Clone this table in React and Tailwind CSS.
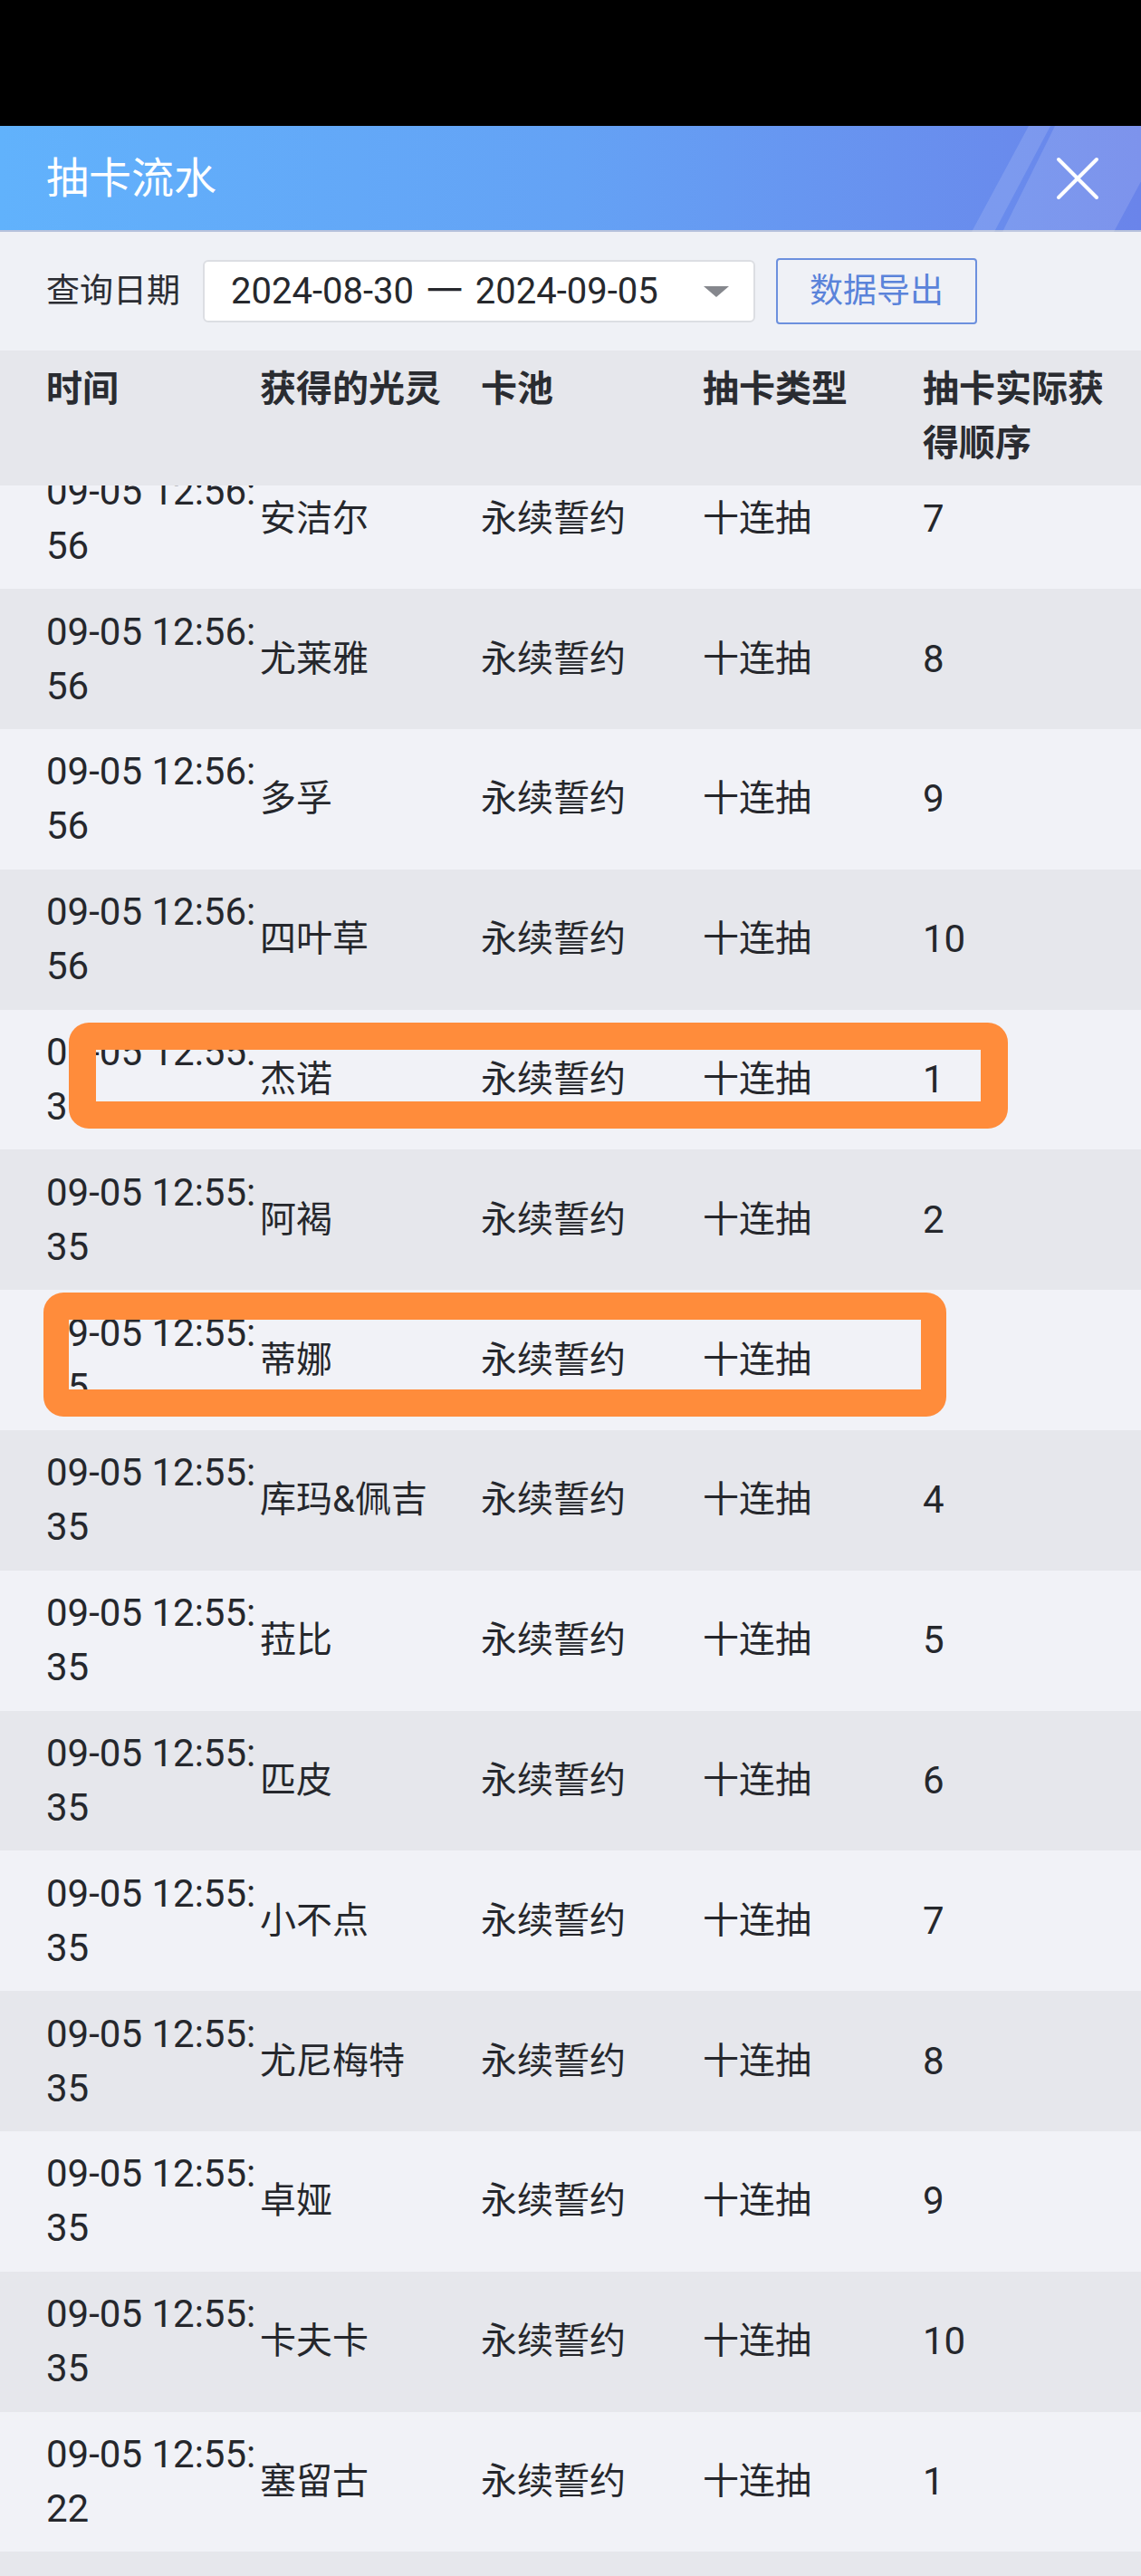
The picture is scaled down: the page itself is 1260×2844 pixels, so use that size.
import React from "react";

const rows = [
  { t1: "09-05 12:56:", t2: "56", name: "安洁尔", order: "7" },
  { t1: "09-05 12:56:", t2: "56", name: "尤莱雅", order: "8" },
  { t1: "09-05 12:56:", t2: "56", name: "多孚", order: "9" },
  { t1: "09-05 12:56:", t2: "56", name: "四叶草", order: "10" },
  { t1: "09-05 12:55:", t2: "35", name: "杰诺", order: "1" },
  { t1: "09-05 12:55:", t2: "35", name: "阿褐", order: "2" },
  { t1: "09-05 12:55:", t2: "35", name: "蒂娜", order: "3" },
  { t1: "09-05 12:55:", t2: "35", name: "库玛&佩吉", order: "4" },
  { t1: "09-05 12:55:", t2: "35", name: "菈比", order: "5" },
  { t1: "09-05 12:55:", t2: "35", name: "匹皮", order: "6" },
  { t1: "09-05 12:55:", t2: "35", name: "小不点", order: "7" },
  { t1: "09-05 12:55:", t2: "35", name: "尤尼梅特", order: "8" },
  { t1: "09-05 12:55:", t2: "35", name: "卓娅", order: "9" },
  { t1: "09-05 12:55:", t2: "35", name: "卡夫卡", order: "10" },
  { t1: "09-05 12:55:", t2: "22", name: "塞留古", order: "1" },
  { t1: "", t2: "", name: "", order: "", pool: "", type: "" },
];

export default function App() {
  return (
    <div className="relative flex h-[2844px] w-[1260px] flex-col overflow-hidden bg-[#f1f2f7] font-[Roboto,'Noto_Sans_CJK_SC',sans-serif] text-[#25272c]">
      {/* status bar */}
      <div className="h-[139px] shrink-0 bg-black" />

      {/* title bar */}
      <div className="relative flex h-[117px] shrink-0 items-center border-b-2 border-[#b7c2dc] bg-linear-to-r from-[#61b2fc] via-[#64a2f5] to-[#6a84ea] pl-[51px]">
        <svg
          className="pointer-events-none absolute inset-0"
          width="1260"
          height="117"
          viewBox="0 0 1260 117"
        >
          <polygon points="1073,117 1098,117 1160,0 1136,0" fill="#ffffff" fillOpacity="0.13" />
          <polygon points="1107,117 1230,117 1293,0 1165,0" fill="#ffffff" fillOpacity="0.13" />
        </svg>
        <span className="relative text-[47px] leading-none text-white">抽卡流水</span>
        <svg
          className="relative ml-auto mr-[46px]"
          width="48"
          height="48"
          viewBox="0 0 48 48"
        >
          <path d="M3 3 L45 45 M45 3 L3 45" stroke="#ffffff" strokeWidth="4" strokeLinecap="round" />
        </svg>
      </div>

      {/* toolbar */}
      <div className="flex h-[131px] shrink-0 items-center bg-[#eff1f6] pl-[51px]">
        <span className="w-[173px] text-[37px] leading-none text-[#2b2d33]">查询日期</span>
        <div className="flex h-[69px] w-[610px] items-center rounded-[6px] border-2 border-[#dcdee3] bg-white pl-[29px]">
          <span className="text-[40px] leading-none text-[#26282d] [word-spacing:4px]">
            2024-08-30 一 2024-09-05
          </span>
          <svg className="ml-auto mr-[27px]" width="28" height="12" viewBox="0 0 28 12">
            <polygon points="0,0 28,0 14,12" fill="#85878d" />
          </svg>
        </div>
        <div className="ml-[23px] flex h-[73px] w-[222px] items-center justify-center rounded-[4px] border-2 border-[#6c90de] text-[37px] leading-none text-[#5a83da]">
          数据导出
        </div>
      </div>

      {/* table header */}
      <div className="grid h-[149px] shrink-0 grid-cols-[287px_244px_245px_243px_241px] bg-[#e6e7ec] pt-[13px] text-[40px] font-bold leading-[60px] text-[#2a2c31]">
        <div className="pl-[51px]">时间</div>
        <div>获得的光灵</div>
        <div>卡池</div>
        <div>抽卡类型</div>
        <div>
          <div>抽卡实际获</div>
          <div>得顺序</div>
        </div>
      </div>

      {/* table body */}
      <div className="flex-1 overflow-hidden">
        <div className="-mt-[40.5px]">
          {rows.map((r, i) => (
            <div
              key={i}
              className={
                "grid h-[154.8px] grid-cols-[287px_244px_245px_243px_241px] items-center text-[42px] leading-[60px] " +
                (i % 2 === 0 ? "bg-[#f1f2f7]" : "bg-[#e6e7ec]")
              }
            >
              <div className="whitespace-nowrap pl-[51px]">
                <div className="h-[60px]">{r.t1}</div>
                <div className="h-[60px]">{r.t2}</div>
              </div>
              <div className="whitespace-nowrap text-[40px]">{r.name}</div>
              <div className="whitespace-nowrap text-[40px]">{r.pool === undefined ? "永续誓约" : r.pool}</div>
              <div className="whitespace-nowrap text-[40px]">{r.type === undefined ? "十连抽" : r.type}</div>
              <div>{r.order}</div>
            </div>
          ))}
        </div>
      </div>

      {/* orange annotation boxes */}
      <div className="pointer-events-none absolute left-[76px] top-[1129px] h-[117px] w-[1037px] rounded-[22px] border-[30px] border-[#ff8c3b]" />
      <div className="pointer-events-none absolute left-[48px] top-[1427px] h-[137px] w-[997px] rounded-[22px] border-x-[28px] border-y-[30px] border-[#ff8c3b]" />
    </div>
  );
}
